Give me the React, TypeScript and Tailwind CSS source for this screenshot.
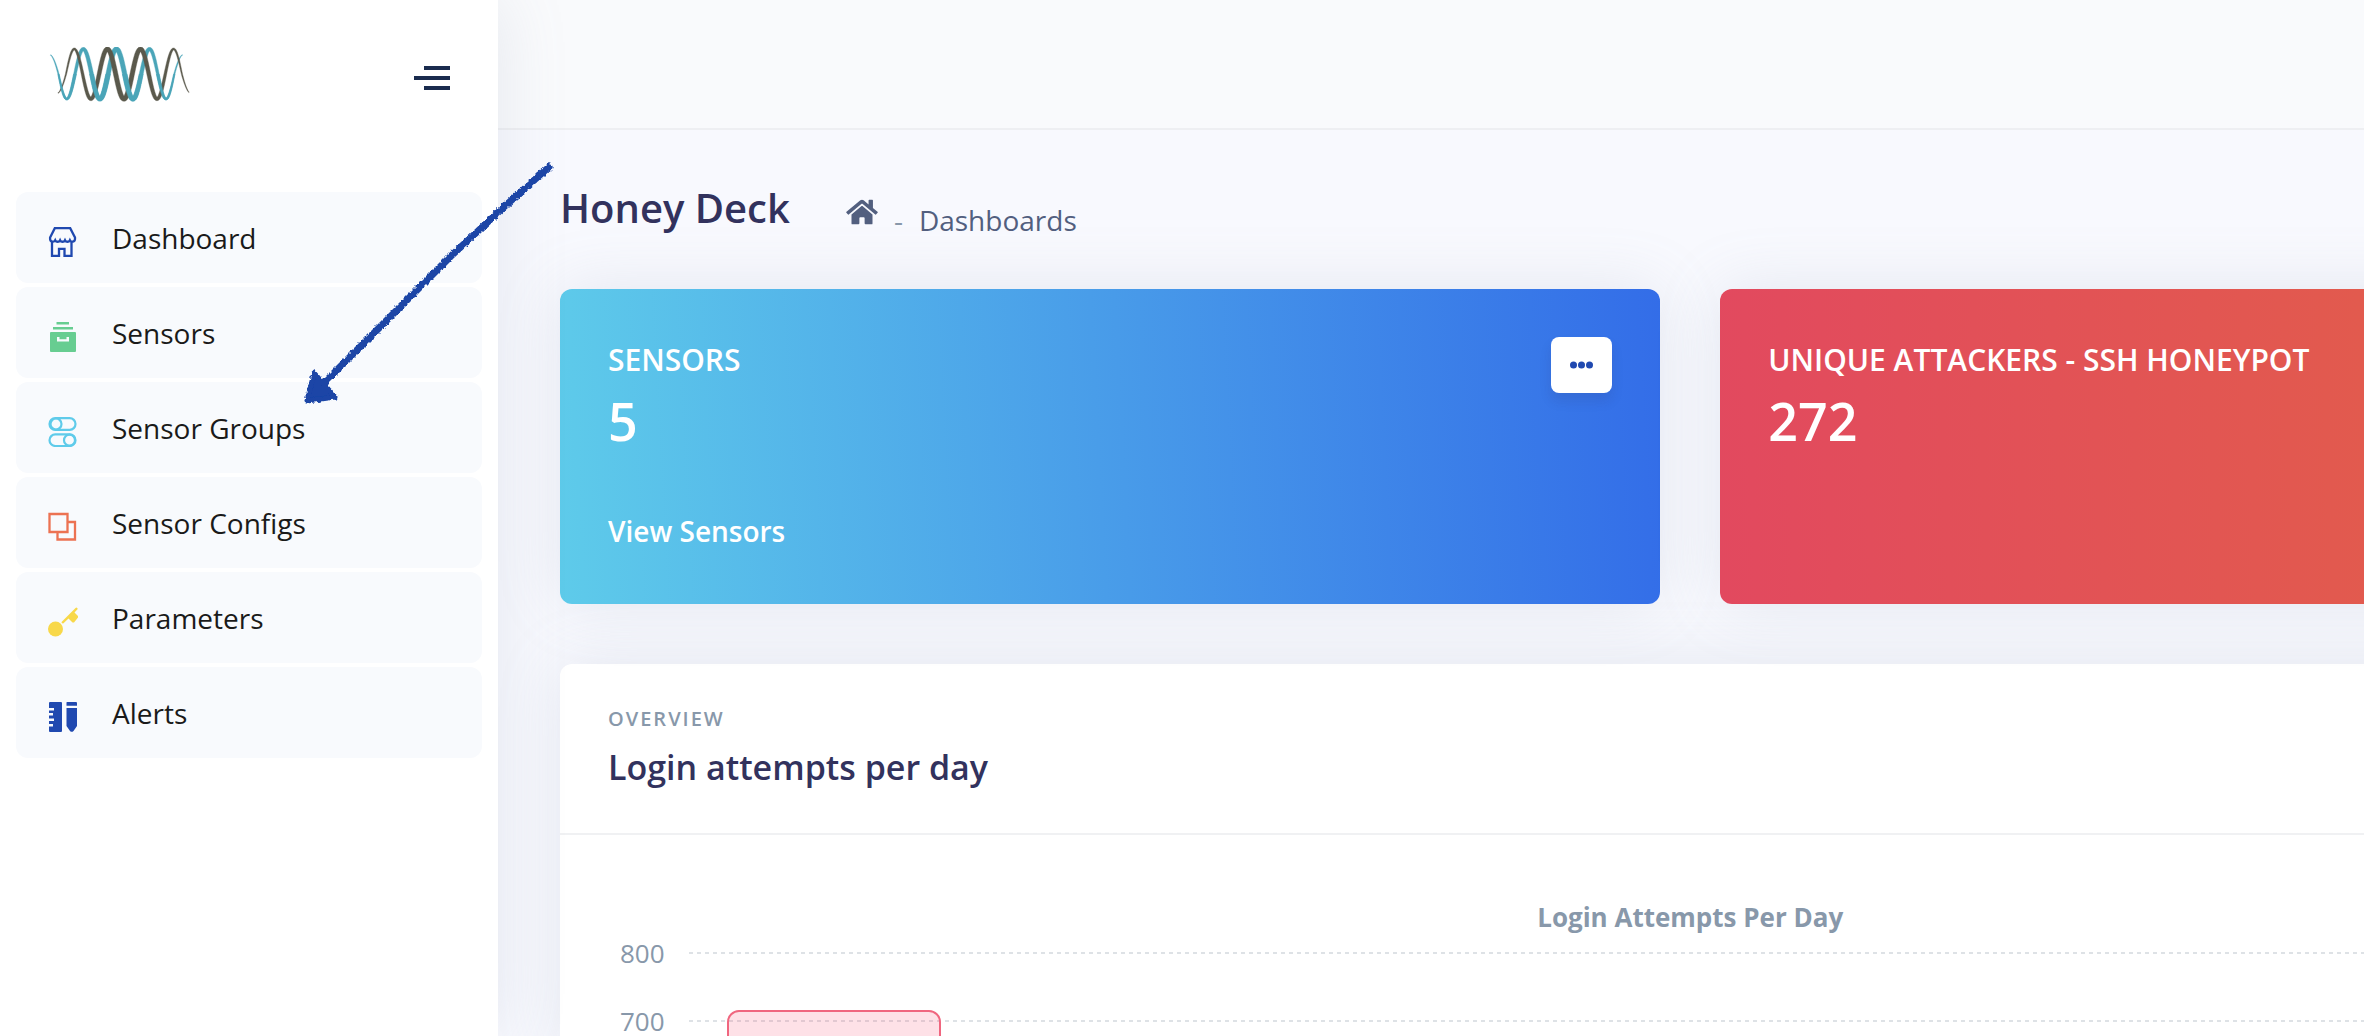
import React from "react";

type Point = { x: number; y: number };

// A cosine curve whose two outer tails flatten out before reaching full height.
function wave(start: number, end: number, peak: number, first: number, last: number): Point[] {
  const points: Point[] = [];
  for (let x = start; x <= end; x += 0.5) {
    let y = -25 * Math.cos(((x - peak) * 2 * Math.PI) / 33.1);
    const u = Math.max(first - x, x - last) - 8.3;
    if (u > 0) {
      const t = Math.min(1, u / 8);
      y = Math.sign(y) * 19 * (1 - Math.pow(1 - t, 1.6));
    }
    points.push({ x, y: 27 + y });
  }
  return points;
}

function ribbon(points: Point[]): string {
  const left: string[] = [];
  const right: string[] = [];
  points.forEach((p, i) => {
    const a = points[Math.max(0, i - 1)];
    const b = points[Math.min(points.length - 1, i + 1)];
    const len = Math.hypot(b.x - a.x, b.y - a.y) || 1;
    const half = 0.25 + 2.05 * Math.sin((Math.PI * i) / (points.length - 1));
    const nx = (-(b.y - a.y) / len) * half;
    const ny = ((b.x - a.x) / len) * half;
    left.push(`${(p.x + nx).toFixed(2)},${(p.y + ny).toFixed(2)}`);
    right.unshift(`${(p.x - nx).toFixed(2)},${(p.y - ny).toFixed(2)}`);
  });
  return `M${left.concat(right).join("L")}Z`;
}

const tealWave = ribbon(wave(2.5, 134.5, 35.3, 18.75, 118.05));
const darkWave = ribbon(wave(10, 141, 26.3, 26.3, 125.6));

function Logo() {
  return (
    <svg className="h-[58px] w-[144px]" viewBox="0 0 144 58" aria-label="Wave logo" role="img">
      <clipPath id="lower">
        <rect x="0" y="27" width="144" height="31" />
      </clipPath>
      <path d={tealWave} fill="#4aa5b8" stroke="#4aa5b8" strokeWidth="0.4" />
      <path d={darkWave} fill="#5a594c" stroke="#5a594c" strokeWidth="0.4" />
      <path d={tealWave} fill="#4aa5b8" stroke="#4aa5b8" strokeWidth="0.4" clipPath="url(#lower)" />
    </svg>
  );
}

const iconClass = "mt-2 h-[30px] w-[30px] shrink-0";

const ShopIcon = () => (
  <svg className={iconClass} viewBox="0 0 30 30" fill="none" stroke="#2049b0" strokeWidth="2.300">
    <path d="M6.800 1.200h15.400l4.800 9.300v1.500a2.700 2.700 0 0 1-5.100 1.200a2.700 2.700 0 0 1-4.900 0a2.700 2.700 0 0 1-4.900 0a2.700 2.700 0 0 1-4.900 0a2.700 2.700 0 0 1-5.100-1.200v-1.500z" />
    <path d="M4 14v14.800h7v-7h5.500v7h7V14" />
  </svg>
);
const ArchiveIcon = () => (
  <svg className={iconClass} viewBox="0 0 30 30" fill="#67cd91">
    <path d="M8.500 0h12.500v2.500H8.500zM5 5h20v2.500H5z" />
    <path fillRule="evenodd" d="M3 10h24a1 1 0 0 1 1 1v18a1 1 0 0 1-1 1h-24a1 1 0 0 1-1-1V11a1 1 0 0 1 1-1zM9 15v4.500h12V15h-2.500v2.300h-7V15z" />
  </svg>
);
const TogglesIcon = () => (
  <svg className={iconClass} viewBox="0 0 30 30" fill="none" stroke="#5fcbea" strokeWidth="2.200">
    <rect x="1.500" y="1.200" width="26" height="11.600" rx="5.800" />
    <circle cx="8" cy="7" r="5.500" />
    <rect x="1.500" y="17.400" width="26" height="11.600" rx="5.800" />
    <circle cx="21.500" cy="23.200" r="5.500" />
  </svg>
);
const CopyIcon = () => (
  <svg className={iconClass} viewBox="0 0 30 30" fill="none" stroke="#ec7252" strokeWidth="2.300">
    <path d="M1.500 2h18v18h-18zM19.500 10h7.500v17.500H9.500V20" />
  </svg>
);
const KeyIcon = () => (
  <svg className={iconClass} viewBox="0 0 30 30" fill="#f8d84a">
    <circle cx="7.500" cy="22" r="7.500" />
    <path d="M14 14.500L27.500 1a1 1 0 0 1 1.800 1.600L26.500 5.500L30 9v1.500L26 15.500h-1.500L20.500 11.500L15.500 16.200a1 1 0 0 1-1.500-1.700z" />
  </svg>
);
const RulerIcon = () => (
  <svg className={iconClass} viewBox="0 0 30 30" fill="#2049b0">
    <path d="M2 0h11a1 1 0 0 1 1 1v28a1 1 0 0 1-1 1H2a1 1 0 0 1-1-1v-4.500h4V22H1v-3h5v-2.500H1v-3h4V11H1V8.500h5V6H1V1a1 1 0 0 1 1-1z" />
    <path d="M20 0h8a1 1 0 0 1 1 1v2.800H18.500V1a1 1 0 0 1 1.500-1zM18.500 6H29v18l-3.500 5a2.500 2.500 0 0 1-3.500 0l-3.500-5z" />
  </svg>
);

const navItems = [
  { label: "Dashboard", icon: <ShopIcon /> },
  { label: "Sensors", icon: <ArchiveIcon /> },
  { label: "Sensor Groups", icon: <TogglesIcon /> },
  { label: "Sensor Configs", icon: <CopyIcon /> },
  { label: "Parameters", icon: <KeyIcon /> },
  { label: "Alerts", icon: <RulerIcon /> },
];

function Sidebar() {
  return (
    <aside className="z-10 w-[498px] shrink-0 bg-white shadow-[0_0_64px_0_rgba(136,152,170,0.18)]">
      <div className="flex h-[152px] items-center justify-between pr-12 pl-12">
        <Logo />
        <button type="button" aria-label="Toggle menu" className="pt-1">
          <svg className="h-6 w-9" viewBox="0 0 36 24" fill="#1a2b4e">
            <path d="M10 0h26v4H10zM0 10h36v4H0zM10 20h26v4H10z" />
          </svg>
        </button>
      </div>
      <nav className="mt-10 flex flex-col gap-1 px-4">
        {navItems.map((item) => (
          <a
            key={item.label}
            href="#"
            className="flex h-[91px] items-center gap-[34px] rounded-xl bg-[#f8fafd] pl-8 text-[28px] text-[#1a1a1a]"
          >
            {item.icon}
            <span>{item.label}</span>
          </a>
        ))}
      </nav>
    </aside>
  );
}

function StatCard({
  title,
  value,
  className,
  children,
}: {
  title: string;
  value: string;
  className: string;
  children?: React.ReactNode;
}) {
  return (
    <section
      className={
        "relative h-[315px] rounded-xl px-12 pt-[50px] text-white shadow-[0_0_64px_0_rgba(136,152,170,0.18)] " + className
      }
    >
      <h2 className="text-[30px] leading-[42px] font-semibold">{title}</h2>
      <p className="mt-[6px] text-[52px] leading-[68px] font-semibold">{value}</p>
      {children}
    </section>
  );
}

const ticks = [800, 700];

function Chart() {
  return (
    <div className="px-12 pt-[60px]">
      <h4 className="text-center text-[26px] leading-[44px] font-bold text-[#8898aa]">Login Attempts Per Day</h4>
      <div className="relative -mt-5 pl-3">
        {ticks.map((tick) => (
          <div key={tick} className="flex h-[68px] items-center">
            <span className="w-[69px] text-[26px] leading-[36px] text-[#8898aa]">{tick}</span>
            <div className="h-[2px] flex-1 bg-[repeating-linear-gradient(90deg,#dee2e6_0px,#dee2e6_4px,transparent_4px,transparent_8px)]" />
          </div>
        ))}
        <div className="absolute top-[91px] left-[119px] h-[600px] w-[214px] rounded-xl border-2 border-[#f0667f] bg-[#f5365c]/15" />
      </div>
    </div>
  );
}

function Arrow() {
  return (
    <svg
      className="pointer-events-none absolute top-[150px] left-[290px] z-20 h-[270px] w-[280px]"
      viewBox="0 0 280 270"
      aria-hidden="true"
    >
      <filter id="rough" x="-10%" y="-10%" width="120%" height="120%">
        <feTurbulence type="fractalNoise" baseFrequency="0.35" numOctaves="2" seed="4" result="noise" />
        <feDisplacementMap in="SourceGraphic" in2="noise" scale="4" xChannelSelector="R" yChannelSelector="G" />
      </filter>
      <g filter="url(#rough)" stroke="#1a44a6" fill="#1a44a6" strokeLinecap="round" strokeLinejoin="round">
        <path d="M259 17L215 56L161 106L111 156L65 202L34 233" fill="none" strokeWidth="7" />
        <path d="M24 223L17 251L45 247Z" strokeWidth="5" />
      </g>
    </svg>
  );
}

export default function App() {
  return (
    <div className="relative flex h-screen overflow-hidden bg-[#f8f9fe] font-['Open_Sans',sans-serif]">
      <Sidebar />
      <main className="min-w-0 flex-1 overflow-hidden">
        <header className="h-[130px] border-b-2 border-[#eeeff2] bg-[#f9fafc]" />
        <div className="w-[128%] pr-[66px] pl-[62px]">
          <div className="flex h-[159px] items-start pt-[50px]">
            <h1 className="text-[40px] leading-[56px] font-semibold text-[#32325d]">Honey Deck</h1>
            <nav aria-label="Breadcrumb" className="ml-14 flex items-start text-[28px] leading-[40px] text-[#525f7f]">
              <a href="#" aria-label="Home" className="pt-[18px]">
                <svg className="h-7 w-8" viewBox="0 0 576 512" fill="currentColor">
                  <path d="M280.370 148.260L96 300.110V464a16 16 0 0 0 16 16l112.060-.29a16 16 0 0 0 15.920-16V368a16 16 0 0 1 16-16h64a16 16 0 0 1 16 16v95.640a16 16 0 0 0 16 16.050L464 480a16 16 0 0 0 16-16V300L295.670 148.260a12.190 12.190 0 0 0-15.300 0zM571.600 251.470L488 182.560V44.050a12 12 0 0 0-12-12h-56a12 12 0 0 0-12 12v72.610L318.470 43a48 48 0 0 0-61 0L4.340 251.470a12 12 0 0 0-1.600 16.900l25.500 31A12 12 0 0 0 45.150 301l235.220-193.740a12.190 12.190 0 0 1 15.300 0L530.900 301a12 12 0 0 0 16.900-1.600l25.500-31a12 12 0 0 0-1.700-16.930z" />
                </svg>
              </a>
              <span className="mt-5 ml-4 text-[#8898aa]">-</span>
              <a href="#" className="mt-5 ml-4">
                Dashboards
              </a>
            </nav>
          </div>

          <div className="grid grid-cols-2 gap-[60px]">
            <StatCard title="SENSORS" value="5" className="bg-[linear-gradient(87deg,#5ecbea,#336de8)]">
              <a href="#" className="mt-[56px] block text-[28px] leading-[40px] font-semibold">
                View Sensors
              </a>
              <button
                type="button"
                aria-label="Sensor options"
                className="absolute top-12 right-12 flex h-14 w-[61px] items-center justify-center rounded-lg bg-white shadow-[0_8px_12px_rgba(50,50,93,0.13)]"
              >
                <svg className="h-2 w-6" viewBox="0 0 24 8" fill="#2049b0">
                  <circle cx="3.500" cy="4" r="3.500" />
                  <circle cx="11.500" cy="4" r="3.500" />
                  <circle cx="19.500" cy="4" r="3.500" />
                </svg>
              </button>
            </StatCard>
            <StatCard
              title="UNIQUE ATTACKERS - SSH HONEYPOT"
              value="272"
              className="bg-[linear-gradient(87deg,#e2495f,#e26642)]"
            />
          </div>

          <section className="mt-[60px] rounded-xl bg-white shadow-[0_0_64px_0_rgba(136,152,170,0.18)]">
            <div className="h-[171px] border-b-2 border-[#f0f1f3] px-12 pt-10">
              <h6 className="text-[20px] leading-[30px] font-semibold tracking-[2px] text-[#8898aa]">OVERVIEW</h6>
              <h3 className="mt-2 text-[34px] leading-[50px] font-semibold text-[#32325d]">Login attempts per day</h3>
            </div>
            <Chart />
          </section>
        </div>
      </main>
      <Arrow />
    </div>
  );
}
